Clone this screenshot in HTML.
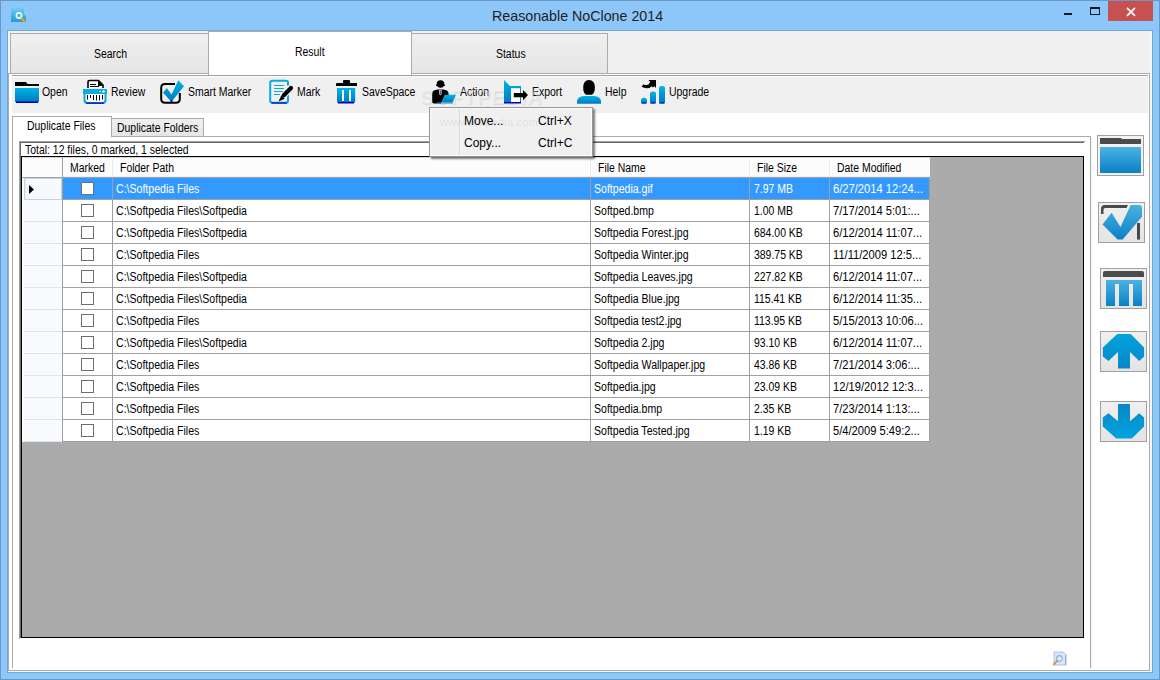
<!DOCTYPE html>
<html><head><meta charset="utf-8">
<style>
*{margin:0;padding:0;box-sizing:border-box}
html,body{width:1160px;height:680px;overflow:hidden}
body{background:#8dc7f9;font-family:"Liberation Sans",sans-serif;font-size:12px;color:#000;position:relative}
.a{position:absolute}
.t{position:absolute;white-space:pre;line-height:12px;font-size:12px;transform:scaleX(.87);transform-origin:0 0;margin-top:-1px}
.w{color:#fff}
.m{position:absolute;white-space:pre;line-height:12px;font-size:12px;margin-top:-1px}
svg{position:absolute;overflow:visible}
</style></head><body>
<div class="a" style="left:0px;top:0px;width:1160px;height:1px;background:#6a98c4;"></div>
<div class="a" style="left:0px;top:0px;width:1px;height:680px;background:#6a98c4;"></div>
<div class="a" style="left:1159px;top:0px;width:1px;height:680px;background:#6a98c4;"></div>
<div class="a" style="left:0px;top:679px;width:1160px;height:1px;background:#6a98c4;"></div>
<svg style="left:11px;top:7px" width="16" height="16" viewBox="0 0 16 16"><defs><linearGradient id="ig" x1="0" y1="0" x2="0" y2="1"><stop offset="0" stop-color="#74d2f6"/><stop offset="1" stop-color="#2a96d2"/></linearGradient></defs><path d="M0 0H13V7L15 9V15H0Z" fill="url(#ig)"/><circle cx="8" cy="8.5" r="2.6" fill="none" stroke="#eaf8ff" stroke-width="1.6"/><path d="M10 11L14 15" stroke="#f5a800" stroke-width="2"/></svg>
<div class="a" style="left:492px;top:7px;font-size:15px;line-height:18px;color:#1e1e1e;white-space:pre;transform:scaleX(.95);transform-origin:0 0">Reasonable NoClone 2014</div>
<div class="a" style="left:1064px;top:13px;width:8px;height:2px;background:#1a1a1a;"></div>
<div class="a" style="left:1090px;top:7px;width:10px;height:8px;border:1px solid #1a1a1a;border-top-width:2px"></div>
<div class="a" style="left:1108px;top:1px;width:45px;height:20px;background:#c75050;"></div>
<svg style="left:1124px;top:5px" width="14" height="14" viewBox="0 0 14 14"><path d="M3 2.8L11 10.8M11 2.8L3 10.8" stroke="#fff" stroke-width="1.7"/></svg>
<div class="a" style="left:7px;top:30px;width:1146px;height:643px;background:#76a9d6;"></div>
<div class="a" style="left:8px;top:31px;width:1144px;height:641px;background:#f8f6f4;"></div>
<div class="a" style="left:8px;top:31px;width:1142px;height:43px;background:#f0f0f0;"></div>
<div class="a" style="left:8px;top:31px;width:2px;height:42px;background:#f8f6f4;"></div>
<div class="a" style="left:8px;top:73px;width:1142px;height:598px;background:#fff;border:1px solid #acacac"></div>
<div class="a" style="left:10px;top:33px;width:199px;height:41px;border:1px solid #acacac;background:linear-gradient(#f0f0f0,#e5e5e5)"></div>
<div class="a" style="left:411px;top:33px;width:197px;height:41px;border:1px solid #acacac;background:linear-gradient(#f0f0f0,#e5e5e5)"></div>
<div class="a" style="left:208px;top:31px;width:204px;height:44px;border:1px solid #acacac;border-bottom:none;background:#fff"></div>
<div class="t" style="left:94px;top:49px;">Search</div>
<div class="t" style="left:295px;top:47px;">Result</div>
<div class="t" style="left:496px;top:49px;">Status</div>
<div class="a" style="left:12px;top:75px;width:1136px;height:1px;background:#a0a0a0;"></div>
<div class="a" style="left:12px;top:76px;width:1136px;height:1px;background:#ffffff;"></div>
<div class="a" style="left:12px;top:77px;width:1136px;height:36px;background:#f0f0f0;"></div>
<div class="t" style="left:42px;top:87px;">Open</div>
<div class="t" style="left:111px;top:87px;">Review</div>
<div class="t" style="left:188px;top:87px;">Smart Marker</div>
<div class="t" style="left:297px;top:87px;">Mark</div>
<div class="t" style="left:362px;top:87px;">SaveSpace</div>
<div class="t" style="left:460px;top:87px;">Action</div>
<div class="t" style="left:532px;top:87px;">Export</div>
<div class="t" style="left:605px;top:87px;">Help</div>
<div class="t" style="left:669px;top:87px;">Upgrade</div>
<div class="a" style="left:420px;top:86px;font-size:21px;line-height:22px;font-weight:bold;letter-spacing:1.5px;color:rgba(255,255,255,.4);text-shadow:1px 1px 1px rgba(0,0,0,.1);white-space:pre;transform:scaleX(.92);transform-origin:0 0">SOFTPEDIA</div>
<svg style="left:0;top:0" width="1160" height="680" viewBox="0 0 1160 680">
<defs>
<linearGradient id="bg" x1="0" y1="0" x2="0" y2="1"><stop offset="0" stop-color="#00b4e4"/><stop offset="1" stop-color="#0078c2"/></linearGradient>
<linearGradient id="bg2" x1="0" y1="0" x2="0" y2="1"><stop offset="0" stop-color="#4cb3e3"/><stop offset="1" stop-color="#0a7fc6"/></linearGradient>
<linearGradient id="bg3" x1="0" y1="0" x2="0" y2="1"><stop offset="0" stop-color="#0d8fd0"/><stop offset="1" stop-color="#0aa4dc"/></linearGradient>
</defs>
<!-- Open folder -->
<path d="M15 82H26L27.5 84H39V86H15Z" fill="#000"/>
<rect x="15" y="88" width="24" height="14" fill="url(#bg)"/>
<rect x="16" y="101.5" width="22" height="1.5" fill="#0000c0"/>
<!-- Review shredder -->
<path d="M88 88V82Q88 80.5 89.5 80.5H98.5L103 85V88" fill="#fff" stroke="#000" stroke-width="1.6"/><path d="M98 80.5L103.5 86H98Z" fill="#000"/>
<path d="M90 84.5H96M90 86.5H99" stroke="#000" stroke-width="1"/>
<path d="M84.5 94V100Q84.5 103 87.5 103H102.5Q105.5 103 105.5 100V94" fill="#fff" stroke="#0aa6dc" stroke-width="2"/>
<path d="M83 89H107V94H83Z" fill="#0aaee2"/>
<circle cx="103.5" cy="91.5" r="1.3" fill="#e8f6fc"/><rect x="99" y="91" width="2" height="1" fill="#e8f6fc"/>
<path d="M87.5 95V99.5M90.5 95V98M93.5 95V100M96.5 95V100.5M99.5 95V100.5M102.5 95V99.5" stroke="#000" stroke-width="1"/>
<rect x="86" y="102.5" width="18" height="1.2" fill="#0000c0"/>
<!-- Smart marker -->
<path d="M175 84H165Q161.2 84 161.2 87.8V99Q161.2 102.8 165 102.8H176Q179.8 102.8 179.8 99V93" fill="none" stroke="#000" stroke-width="2"/>
<path d="M163 92.7L166.8 88L171.5 94.4L178.3 80.3L184 86.3L171.5 101.7Z" fill="url(#bg)"/>
<path d="M170.5 100.8L171.5 101.8L172.5 100.8Z" fill="#0000c0" stroke="#0000c0" stroke-width="1"/>
<!-- Mark notepad -->
<path d="M288 85.5V82.5Q288 80.8 286 80.8H272.5Q270.2 80.8 270.2 83V100.5Q270.2 102.8 272.5 102.8H285.8Q288 102.8 288 100.5V95" fill="none" stroke="#0aaae0" stroke-width="2"/>
<path d="M271.5 103H287" stroke="#0000c0" stroke-width="1.2"/>
<path d="M274 85.5H284M274 88.5H284M274 91.5H283M274 94.5H280" stroke="#0aaae0" stroke-width="1.2"/>
<path d="M283.8 95.2L291 88" stroke="#f0f0f0" stroke-width="6.5" stroke-linecap="round"/><path d="M283.8 95.2L291 88" stroke="#000" stroke-width="4.2" stroke-linecap="round"/><path d="M281.3 95.3L284.7 98.7L278.6 101.4Z" fill="#000"/>
<!-- SaveSpace trash -->
<path d="M343 83V81Q343 80 344 80H349Q350 80 350 81V83H356.5Q357 83 357 84V86H336V84Q336 83 337 83Z" fill="#000"/>
<rect x="337" y="88" width="18.2" height="14.5" fill="url(#bg)"/>
<rect x="342" y="90" width="2" height="11" fill="#fff"/><rect x="349" y="90" width="2" height="11" fill="#fff"/>
<rect x="338" y="102" width="16" height="1.5" fill="#0000c0"/>
<!-- Action person -->
<circle cx="440.5" cy="84" r="3.8" fill="#000"/>
<path d="M436 85.2H445" stroke="#000" stroke-width="1.3"/>
<path d="M437.5 89.5H443.5L447 90.5Q448.6 91.5 448.6 94V95H445L441 103.6H434Q432.2 103.6 432.2 101.5V94Q432.2 91 434.5 90.2Z" fill="#000"/>
<path d="M439.2 90V94L440.3 95.5L441.5 94V90Z" fill="#fff"/>
<path d="M440.3 90.5V94.5" stroke="#000" stroke-width="0.8"/>
<path d="M445 94.8H456L452.5 102.5H441.5Z" fill="url(#bg)"/>
<path d="M437 102.5H453V103.6H437Z" fill="#18a0de"/>
<!-- Export door -->
<path d="M504 80L510 86H521V103H504Z" fill="url(#bg)"/>
<rect x="511" y="88.2" width="9" height="14.5" fill="#fff"/>
<rect x="504" y="102" width="17" height="1.5" fill="#0000c0"/>
<path d="M513.8 93.1H523V90L528 95L523 100.2V97.2H513.8Z" fill="#000"/>
<!-- Help person -->
<path d="M589 80Q594.8 80.3 594.9 87Q595 92.5 592 94.8H586Q583 92.5 583.2 87Q583.4 80.3 589 80Z" fill="#000"/>
<path d="M577 103.8V101Q577.5 96.5 584 95.9H594Q600.5 96.5 601 101V103.8Z" fill="url(#bg)"/>
<!-- Upgrade bars -->
<path d="M641 103.6V100.5Q641 97.8 644 97.8Q647 97.8 647 100.5V103.6Z" fill="url(#bg)"/>
<path d="M650 103.6V94Q650 91.6 653 91.6Q656 91.6 656 94V103.6Z" fill="url(#bg)"/>
<path d="M659 103.6V88Q659 85.9 662 85.9Q665 85.9 665 88V103.6Z" fill="url(#bg)"/>
<path d="M642 103H646M651 103H655M660 103H664" stroke="#0000c0" stroke-width="1.2"/>
<path d="M642.5 85.5Q647.5 88.5 652 84" stroke="#000" stroke-width="3.2" fill="none"/><path d="M648.5 80H656V88Z" fill="#000"/><path d="M650 82.5L654 86.5" stroke="#000" stroke-width="3"/>
</svg>
<div class="a" style="left:12px;top:136px;width:1079px;height:532px;border:1px solid #acacac;border-bottom:none;background:#fff"></div>
<div class="a" style="left:111px;top:118px;width:93px;height:19px;border:1px solid #acacac;background:linear-gradient(#f0f0f0,#e5e5e5)"></div>
<div class="a" style="left:12px;top:116px;width:100px;height:21px;border:1px solid #acacac;border-bottom:none;background:#fff"></div>
<div class="t" style="left:27px;top:121px;">Duplicate Files</div>
<div class="t" style="left:117px;top:123px;">Duplicate Folders</div>
<div class="a" style="left:19px;top:141px;width:1066px;height:1px;background:#a0a0a0;"></div>
<div class="a" style="left:19px;top:141px;width:1px;height:498px;background:#a0a0a0;"></div>
<div class="a" style="left:20px;top:142px;width:1064px;height:1px;background:#696969;"></div>
<div class="a" style="left:20px;top:142px;width:1px;height:496px;background:#696969;"></div>
<div class="a" style="left:1091px;top:137px;width:1px;height:531px;background:#f0f0f0;"></div>
<div class="t" style="left:25px;top:145px;">Total: 12 files, 0 marked, 1 selected</div>
<div class="a" style="left:21px;top:156px;width:1063px;height:482px;border:1px solid #000;background:#ababab"></div>
<div class="a" style="left:22px;top:157px;width:908px;height:20px;background:#fcfcfc;"></div>
<div class="a" style="left:22px;top:177px;width:908px;height:1px;background:#a0a0a0;"></div>
<div class="a" style="left:22px;top:157px;width:908px;height:1px;background:#d4d4d4;"></div>
<div class="a" style="left:63px;top:176px;width:867px;height:1px;background:#e9eff8;"></div>
<div class="a" style="left:62px;top:157px;width:1px;height:20px;background:#a0a0a0;"></div>
<div class="a" style="left:112px;top:159px;width:1px;height:18px;background:#e3ecf7;"></div>
<div class="a" style="left:590px;top:159px;width:1px;height:18px;background:#e3ecf7;"></div>
<div class="a" style="left:749px;top:159px;width:1px;height:18px;background:#e3ecf7;"></div>
<div class="a" style="left:829px;top:159px;width:1px;height:18px;background:#e3ecf7;"></div>
<div class="t" style="left:70px;top:163px;">Marked</div>
<div class="t" style="left:120px;top:163px;">Folder Path</div>
<div class="t" style="left:598px;top:163px;">File Name</div>
<div class="t" style="left:757px;top:163px;">File Size</div>
<div class="t" style="left:837px;top:163px;">Date Modified</div>
<div class="a" style="left:22px;top:178px;width:40px;height:22px;background:#fdfdfe;"></div>
<div class="a" style="left:24px;top:178px;width:37px;height:21px;background:#f8fafd;"></div>
<div class="a" style="left:24px;top:199px;width:37px;height:1px;background:#dde6f2;"></div>
<div class="a" style="left:63px;top:178px;width:867px;height:21px;background:#3399ff;"></div>
<div class="a" style="left:63px;top:199px;width:867px;height:1px;background:#a0a0a0;"></div>
<div class="a" style="left:81px;top:182px;width:13px;height:13px;border:1px solid #6e6e6e;background:#fff"></div>
<div class="t w" style="left:116px;top:184px;transform:scaleX(0.88)">C:\Softpedia Files</div>
<div class="t w" style="left:594px;top:184px;transform:scaleX(0.88)">Softpedia.gif</div>
<div class="t w" style="left:754px;top:184px;transform:scaleX(0.87)">7.97 MB</div>
<div class="t w" style="left:833px;top:184px;transform:scaleX(0.93)">6/27/2014 12:24...</div>
<div class="a" style="left:22px;top:200px;width:40px;height:22px;background:#fdfdfe;"></div>
<div class="a" style="left:24px;top:200px;width:37px;height:21px;background:#f8fafd;"></div>
<div class="a" style="left:24px;top:221px;width:37px;height:1px;background:#dde6f2;"></div>
<div class="a" style="left:63px;top:200px;width:867px;height:21px;background:#fff;"></div>
<div class="a" style="left:63px;top:221px;width:867px;height:1px;background:#a0a0a0;"></div>
<div class="a" style="left:81px;top:204px;width:13px;height:13px;border:1px solid #6e6e6e;background:#fff"></div>
<div class="t " style="left:116px;top:206px;transform:scaleX(0.88)">C:\Softpedia Files\Softpedia</div>
<div class="t " style="left:594px;top:206px;transform:scaleX(0.88)">Softped.bmp</div>
<div class="t " style="left:754px;top:206px;transform:scaleX(0.87)">1.00 MB</div>
<div class="t " style="left:833px;top:206px;transform:scaleX(0.93)">7/17/2014 5:01:...</div>
<div class="a" style="left:22px;top:222px;width:40px;height:22px;background:#fdfdfe;"></div>
<div class="a" style="left:24px;top:222px;width:37px;height:21px;background:#f8fafd;"></div>
<div class="a" style="left:24px;top:243px;width:37px;height:1px;background:#dde6f2;"></div>
<div class="a" style="left:63px;top:222px;width:867px;height:21px;background:#fff;"></div>
<div class="a" style="left:63px;top:243px;width:867px;height:1px;background:#a0a0a0;"></div>
<div class="a" style="left:81px;top:226px;width:13px;height:13px;border:1px solid #6e6e6e;background:#fff"></div>
<div class="t " style="left:116px;top:228px;transform:scaleX(0.88)">C:\Softpedia Files\Softpedia</div>
<div class="t " style="left:594px;top:228px;transform:scaleX(0.88)">Softpedia Forest.jpg</div>
<div class="t " style="left:754px;top:228px;transform:scaleX(0.87)">684.00 KB</div>
<div class="t " style="left:833px;top:228px;transform:scaleX(0.93)">6/12/2014 11:07...</div>
<div class="a" style="left:22px;top:244px;width:40px;height:22px;background:#fdfdfe;"></div>
<div class="a" style="left:24px;top:244px;width:37px;height:21px;background:#f8fafd;"></div>
<div class="a" style="left:24px;top:265px;width:37px;height:1px;background:#dde6f2;"></div>
<div class="a" style="left:63px;top:244px;width:867px;height:21px;background:#fff;"></div>
<div class="a" style="left:63px;top:265px;width:867px;height:1px;background:#a0a0a0;"></div>
<div class="a" style="left:81px;top:248px;width:13px;height:13px;border:1px solid #6e6e6e;background:#fff"></div>
<div class="t " style="left:116px;top:250px;transform:scaleX(0.88)">C:\Softpedia Files</div>
<div class="t " style="left:594px;top:250px;transform:scaleX(0.88)">Softpedia Winter.jpg</div>
<div class="t " style="left:754px;top:250px;transform:scaleX(0.87)">389.75 KB</div>
<div class="t " style="left:833px;top:250px;transform:scaleX(0.93)">11/11/2009 12:5...</div>
<div class="a" style="left:22px;top:266px;width:40px;height:22px;background:#fdfdfe;"></div>
<div class="a" style="left:24px;top:266px;width:37px;height:21px;background:#f8fafd;"></div>
<div class="a" style="left:24px;top:287px;width:37px;height:1px;background:#dde6f2;"></div>
<div class="a" style="left:63px;top:266px;width:867px;height:21px;background:#fff;"></div>
<div class="a" style="left:63px;top:287px;width:867px;height:1px;background:#a0a0a0;"></div>
<div class="a" style="left:81px;top:270px;width:13px;height:13px;border:1px solid #6e6e6e;background:#fff"></div>
<div class="t " style="left:116px;top:272px;transform:scaleX(0.88)">C:\Softpedia Files\Softpedia</div>
<div class="t " style="left:594px;top:272px;transform:scaleX(0.88)">Softpedia Leaves.jpg</div>
<div class="t " style="left:754px;top:272px;transform:scaleX(0.87)">227.82 KB</div>
<div class="t " style="left:833px;top:272px;transform:scaleX(0.93)">6/12/2014 11:07...</div>
<div class="a" style="left:22px;top:288px;width:40px;height:22px;background:#fdfdfe;"></div>
<div class="a" style="left:24px;top:288px;width:37px;height:21px;background:#f8fafd;"></div>
<div class="a" style="left:24px;top:309px;width:37px;height:1px;background:#dde6f2;"></div>
<div class="a" style="left:63px;top:288px;width:867px;height:21px;background:#fff;"></div>
<div class="a" style="left:63px;top:309px;width:867px;height:1px;background:#a0a0a0;"></div>
<div class="a" style="left:81px;top:292px;width:13px;height:13px;border:1px solid #6e6e6e;background:#fff"></div>
<div class="t " style="left:116px;top:294px;transform:scaleX(0.88)">C:\Softpedia Files\Softpedia</div>
<div class="t " style="left:594px;top:294px;transform:scaleX(0.88)">Softpedia Blue.jpg</div>
<div class="t " style="left:754px;top:294px;transform:scaleX(0.87)">115.41 KB</div>
<div class="t " style="left:833px;top:294px;transform:scaleX(0.93)">6/12/2014 11:35...</div>
<div class="a" style="left:22px;top:310px;width:40px;height:22px;background:#fdfdfe;"></div>
<div class="a" style="left:24px;top:310px;width:37px;height:21px;background:#f8fafd;"></div>
<div class="a" style="left:24px;top:331px;width:37px;height:1px;background:#dde6f2;"></div>
<div class="a" style="left:63px;top:310px;width:867px;height:21px;background:#fff;"></div>
<div class="a" style="left:63px;top:331px;width:867px;height:1px;background:#a0a0a0;"></div>
<div class="a" style="left:81px;top:314px;width:13px;height:13px;border:1px solid #6e6e6e;background:#fff"></div>
<div class="t " style="left:116px;top:316px;transform:scaleX(0.88)">C:\Softpedia Files</div>
<div class="t " style="left:594px;top:316px;transform:scaleX(0.88)">Softpedia test2.jpg</div>
<div class="t " style="left:754px;top:316px;transform:scaleX(0.87)">113.95 KB</div>
<div class="t " style="left:833px;top:316px;transform:scaleX(0.93)">5/15/2013 10:06...</div>
<div class="a" style="left:22px;top:332px;width:40px;height:22px;background:#fdfdfe;"></div>
<div class="a" style="left:24px;top:332px;width:37px;height:21px;background:#f8fafd;"></div>
<div class="a" style="left:24px;top:353px;width:37px;height:1px;background:#dde6f2;"></div>
<div class="a" style="left:63px;top:332px;width:867px;height:21px;background:#fff;"></div>
<div class="a" style="left:63px;top:353px;width:867px;height:1px;background:#a0a0a0;"></div>
<div class="a" style="left:81px;top:336px;width:13px;height:13px;border:1px solid #6e6e6e;background:#fff"></div>
<div class="t " style="left:116px;top:338px;transform:scaleX(0.88)">C:\Softpedia Files\Softpedia</div>
<div class="t " style="left:594px;top:338px;transform:scaleX(0.88)">Softpedia 2.jpg</div>
<div class="t " style="left:754px;top:338px;transform:scaleX(0.87)">93.10 KB</div>
<div class="t " style="left:833px;top:338px;transform:scaleX(0.93)">6/12/2014 11:07...</div>
<div class="a" style="left:22px;top:354px;width:40px;height:22px;background:#fdfdfe;"></div>
<div class="a" style="left:24px;top:354px;width:37px;height:21px;background:#f8fafd;"></div>
<div class="a" style="left:24px;top:375px;width:37px;height:1px;background:#dde6f2;"></div>
<div class="a" style="left:63px;top:354px;width:867px;height:21px;background:#fff;"></div>
<div class="a" style="left:63px;top:375px;width:867px;height:1px;background:#a0a0a0;"></div>
<div class="a" style="left:81px;top:358px;width:13px;height:13px;border:1px solid #6e6e6e;background:#fff"></div>
<div class="t " style="left:116px;top:360px;transform:scaleX(0.88)">C:\Softpedia Files</div>
<div class="t " style="left:594px;top:360px;transform:scaleX(0.88)">Softpedia Wallpaper.jpg</div>
<div class="t " style="left:754px;top:360px;transform:scaleX(0.87)">43.86 KB</div>
<div class="t " style="left:833px;top:360px;transform:scaleX(0.93)">7/21/2014 3:06:...</div>
<div class="a" style="left:22px;top:376px;width:40px;height:22px;background:#fdfdfe;"></div>
<div class="a" style="left:24px;top:376px;width:37px;height:21px;background:#f8fafd;"></div>
<div class="a" style="left:24px;top:397px;width:37px;height:1px;background:#dde6f2;"></div>
<div class="a" style="left:63px;top:376px;width:867px;height:21px;background:#fff;"></div>
<div class="a" style="left:63px;top:397px;width:867px;height:1px;background:#a0a0a0;"></div>
<div class="a" style="left:81px;top:380px;width:13px;height:13px;border:1px solid #6e6e6e;background:#fff"></div>
<div class="t " style="left:116px;top:382px;transform:scaleX(0.88)">C:\Softpedia Files</div>
<div class="t " style="left:594px;top:382px;transform:scaleX(0.88)">Softpedia.jpg</div>
<div class="t " style="left:754px;top:382px;transform:scaleX(0.87)">23.09 KB</div>
<div class="t " style="left:833px;top:382px;transform:scaleX(0.93)">12/19/2012 12:3...</div>
<div class="a" style="left:22px;top:398px;width:40px;height:22px;background:#fdfdfe;"></div>
<div class="a" style="left:24px;top:398px;width:37px;height:21px;background:#f8fafd;"></div>
<div class="a" style="left:24px;top:419px;width:37px;height:1px;background:#dde6f2;"></div>
<div class="a" style="left:63px;top:398px;width:867px;height:21px;background:#fff;"></div>
<div class="a" style="left:63px;top:419px;width:867px;height:1px;background:#a0a0a0;"></div>
<div class="a" style="left:81px;top:402px;width:13px;height:13px;border:1px solid #6e6e6e;background:#fff"></div>
<div class="t " style="left:116px;top:404px;transform:scaleX(0.88)">C:\Softpedia Files</div>
<div class="t " style="left:594px;top:404px;transform:scaleX(0.88)">Softpedia.bmp</div>
<div class="t " style="left:754px;top:404px;transform:scaleX(0.87)">2.35 KB</div>
<div class="t " style="left:833px;top:404px;transform:scaleX(0.93)">7/23/2014 1:13:...</div>
<div class="a" style="left:22px;top:420px;width:40px;height:22px;background:#fdfdfe;"></div>
<div class="a" style="left:24px;top:420px;width:37px;height:21px;background:#f8fafd;"></div>
<div class="a" style="left:24px;top:441px;width:37px;height:1px;background:#dde6f2;"></div>
<div class="a" style="left:63px;top:420px;width:867px;height:21px;background:#fff;"></div>
<div class="a" style="left:63px;top:441px;width:867px;height:1px;background:#a0a0a0;"></div>
<div class="a" style="left:81px;top:424px;width:13px;height:13px;border:1px solid #6e6e6e;background:#fff"></div>
<div class="t " style="left:116px;top:426px;transform:scaleX(0.88)">C:\Softpedia Files</div>
<div class="t " style="left:594px;top:426px;transform:scaleX(0.88)">Softpedia Tested.jpg</div>
<div class="t " style="left:754px;top:426px;transform:scaleX(0.87)">1.19 KB</div>
<div class="t " style="left:833px;top:426px;transform:scaleX(0.93)">5/4/2009 5:49:2...</div>
<div class="a" style="left:62px;top:178px;width:1px;height:264px;background:#a0a0a0;"></div>
<div class="a" style="left:112px;top:178px;width:1px;height:264px;background:#a0a0a0;"></div>
<div class="a" style="left:590px;top:178px;width:1px;height:264px;background:#a0a0a0;"></div>
<div class="a" style="left:749px;top:178px;width:1px;height:264px;background:#a0a0a0;"></div>
<div class="a" style="left:829px;top:178px;width:1px;height:264px;background:#a0a0a0;"></div>
<div class="a" style="left:929px;top:178px;width:1px;height:264px;background:#a0a0a0;"></div>
<div class="a" style="left:24px;top:178px;width:38px;height:22px;border:1px solid #c3d2e6;background:linear-gradient(90deg,#e9eef6,#f7f9fc 4px)"></div>
<svg style="left:29px;top:185px" width="6" height="9"><path d="M0 0L5 4.5L0 9Z" fill="#000"/></svg>
<div class="a" style="left:1097px;top:135px;width:47px;height:41px;border:1px solid #a0a0a0;background:#f4f2f0"></div>
<div class="a" style="left:1098px;top:202px;width:47px;height:41px;border:1px solid #a0a0a0;background:linear-gradient(#f0f0f0,#e4e4e4)"></div>
<div class="a" style="left:1100px;top:268px;width:47px;height:41px;border:1px solid #a0a0a0;background:linear-gradient(#f0f0f0,#e4e4e4)"></div>
<div class="a" style="left:1100px;top:331px;width:47px;height:41px;border:1px solid #a0a0a0;background:linear-gradient(#f0f0f0,#e4e4e4)"></div>
<div class="a" style="left:1100px;top:401px;width:47px;height:41px;border:1px solid #a0a0a0;background:linear-gradient(#f0f0f0,#e4e4e4)"></div>
<svg style="left:0;top:0" width="1160" height="680" viewBox="0 0 1160 680">
<defs>
<linearGradient id="rb" x1="0" y1="0" x2="0" y2="1"><stop offset="0" stop-color="#4cb2e2"/><stop offset="1" stop-color="#0a80c6"/></linearGradient>
<linearGradient id="up" x1="0" y1="0" x2="0" y2="1"><stop offset="0" stop-color="#00a4dd"/><stop offset="1" stop-color="#0a86c8"/></linearGradient>
<linearGradient id="dn" x1="0" y1="0" x2="0" y2="1"><stop offset="0" stop-color="#0a86c8"/><stop offset="1" stop-color="#00a4dd"/></linearGradient>
<radialGradient id="mg" cx=".55" cy=".55" r=".6"><stop offset="0" stop-color="#f4fdff"/><stop offset="1" stop-color="#8fd0f0"/></radialGradient>
</defs>
<!-- b1 -->
<path d="M1100 138H1121L1122 139H1141V144H1100Z" fill="#4b4b4e"/>
<rect x="1100" y="147" width="41" height="26" fill="url(#rb)"/>
<!-- b2 -->
<path d="M1101 214V209Q1101 205 1105 205H1128L1126.5 208H1105Q1103.5 208 1103.5 210V214Z" fill="#49494c"/>
<rect x="1137" y="223" width="3" height="16.6" fill="#49494c"/>
<path d="M1102.5 224.5L1111.6 212.8L1120.5 226.9L1130.7 205H1139Q1142 205 1142 208V216.7L1122.6 239.6H1117.6Z" fill="url(#rb)"/>
<!-- b3 -->
<path d="M1103 277V273Q1103 271 1105 271H1142Q1144 271 1144 273V277Z" fill="#4b4b4e"/>
<path d="M1106 280H1142V306H1133V284H1129V306H1119V284H1115V306H1106Z" fill="url(#rb)"/>
<!-- b4 up -->
<path d="M1117.3 334H1130.7L1144.1 347.5V356.6L1139.2 360.9L1130 352V368.6H1118V352L1108.5 360.9L1102.8 356.6V347.5Z" fill="url(#up)"/>
<!-- b5 down -->
<path d="M1118 404H1130V421.3L1139.2 413.2L1144.1 417.5V426.6L1131.8 438.6H1116.2L1102.8 426.6V417.5L1108.5 413.2L1118 421.3Z" fill="url(#dn)"/>
<!-- magnifier doc -->
<path d="M1054 652H1063.5L1066 654.5V665H1054Z" fill="#d6e6fb" stroke="#9fb8e0" stroke-width="0.8"/>
<path d="M1065.5 655V665" stroke="#8090b8" stroke-width="0.8" opacity=".7"/>
<circle cx="1059.4" cy="658.5" r="3" fill="url(#mg)" stroke="#8aa8d8" stroke-width="1"/>
<path d="M1053.8 664.4L1057 661.2" stroke="#e38a2c" stroke-width="1.8" stroke-linecap="round"/>
</svg>
<div class="a" style="left:429px;top:107px;width:164px;height:50px;border:1px solid #979797;background:#f0f0f0;box-shadow:2px 2px 2px rgba(0,0,0,.5),inset 1px 1px #fafafa,inset -1px -1px #fafafa"></div>
<div class="a" style="left:459px;top:110px;width:1px;height:44px;background:#d5d5d5"></div>
<div class="a" style="left:460px;top:110px;width:1px;height:44px;background:#fafafa"></div>
<div class="a" style="left:440px;top:116px;font-size:11px;line-height:12px;color:rgba(0,0,0,.09);white-space:pre;letter-spacing:0.2px">www.softpedia.com</div>
<div class="m" style="left:464px;top:116px">Move...</div>
<div class="m" style="left:538px;top:116px">Ctrl+X</div>
<div class="m" style="left:464px;top:138px">Copy...</div>
<div class="m" style="left:538px;top:138px">Ctrl+C</div>
</body></html>
